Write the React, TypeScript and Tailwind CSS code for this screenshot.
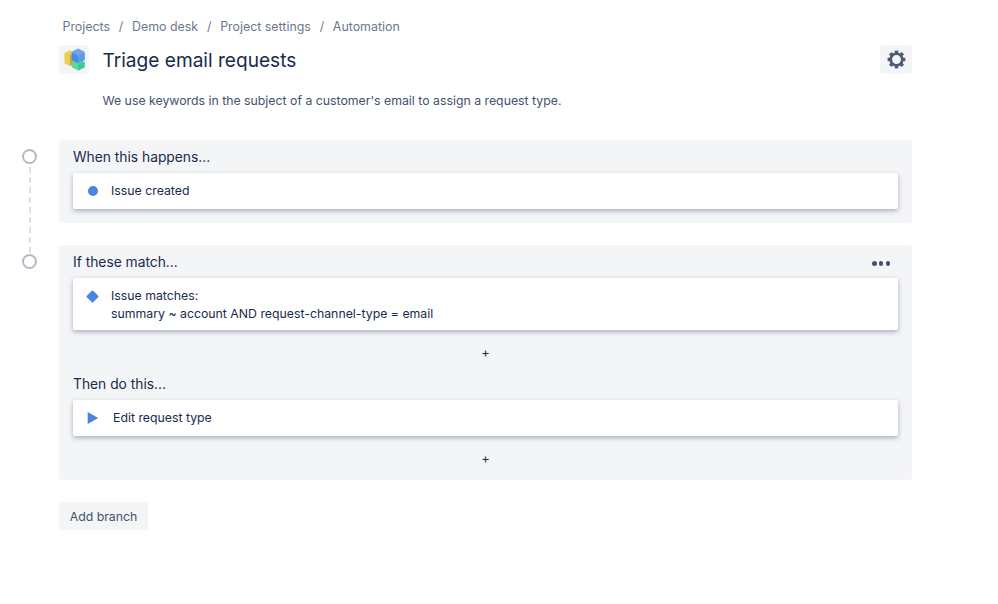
import React from 'react';

const crumbs = ['Projects', 'Demo desk', 'Project settings', 'Automation'];

const Logo = () => (
  <svg width="21" height="23" viewBox="0 0 22 25">
    <path d="M0 5.500 6 2.500l6 3v11l-6 3-6-3z" fill="#e8cf55" />
    <path d="M6 8v11.500l6-3V5.500z" fill="#c9a93a" />
    <path d="M8 15.500l7-3.500 7 3.500V21l-7 3.500L8 21z" fill="#57d9a3" />
    <path d="M15 18v6.500l7-3.500v-6z" fill="#3ec98e" />
    <path d="M8 4l7-3.500L22 4v9l-7 3.500L8 13z" fill="#6ba6ec" />
    <path d="M8 5l7 3.500v8L8 13z" fill="#4a8ae0" />
    <path d="M15 8.500l7-3.500v8l-7 3.500z" fill="#5b9be6" />
  </svg>
);

// ring with eight teeth
const Gear = () => (
  <svg width="19" height="19" viewBox="0 0 24 24" className="text-[#4a5a78]">
    <circle cx="12" cy="12" r="7.300" fill="none" stroke="currentColor" strokeWidth="3.400" />
    {[0, 45, 90, 135, 180, 225, 270, 315].map((a) => (
      <rect key={a} x="9.800" y="0.800" width="4.400" height="4" fill="currentColor" transform={`rotate(${a} 12 12)`} />
    ))}
  </svg>
);

const Card = ({ icon, children, className }: { icon: React.ReactNode; children: React.ReactNode; className: string }) => (
  <div className={`flex items-start bg-white rounded-[2px] pl-[11.500px] text-[12.300px] leading-[18px] text-[#172b4d] shadow-[0_2px_5px_rgba(23,43,77,0.35)] ${className}`}>
    <div className="w-4 h-[18px] flex items-center justify-center shrink-0">{icon}</div>
    <div>{children}</div>
  </div>
);

const Heading = ({ children }: { children: React.ReactNode }) => (
  <h2 className="text-[13.800px] leading-5 text-[#172b4d]">{children}</h2>
);

const Dot = () => <div className="w-[15px] h-[15px] rounded-full border-2 border-[#b3bac5] bg-white" />;

const Plus = () => <div className="text-center text-[13px] leading-4 text-[#172b4d]">+</div>;

export default function App() {
  return (
    <div className="min-h-screen bg-white font-['Inter',sans-serif] pt-[17px] pl-[22px] w-[890px] box-content">
      <div className="pl-[37px]">
        <nav className="flex items-center text-[12.400px] leading-5 text-[#6b778c] pl-[3.500px]">
          {crumbs.map((c, i) => (
            <React.Fragment key={c}>
              {i > 0 && <span className="w-[22px] text-center">/</span>}
              <span>{c}</span>
            </React.Fragment>
          ))}
        </nav>
        <div className="flex items-center justify-between mt-[8px]">
          <div className="flex items-center gap-[13.500px]">
            <div className="w-[30px] h-[29px] bg-[#f4f5f7] rounded-[3px] flex items-center justify-center">
              <Logo />
            </div>
            <h1 className="text-[19.100px] leading-7 text-[#172b4d]">Triage email requests</h1>
          </div>
          <button className="w-8 h-[29px] bg-[#f4f5f7] rounded-[3px] flex items-center justify-center">
            <Gear />
          </button>
        </div>
        <p className="ml-[43.500px] mt-[18px] text-[12.300px] leading-[18px] text-[#42526e]">
          We use keywords in the subject of a customer's email to assign a request type.
        </p>
      </div>

      <div className="flex mt-[30px]">
        <div className="w-[37px] shrink-0 relative pt-[9px]">
          <Dot />
          <div className="absolute left-[7px] top-[27px] h-[86px] w-[2px] bg-[repeating-linear-gradient(to_bottom,#dfe1e6_0,#dfe1e6_6px,transparent_6px,transparent_10px)]" />
        </div>
        <section className="flex-1 h-[83px] bg-[#f4f5f7] rounded-[3px] px-[14px] pt-[7px]">
          <Heading>When this happens...</Heading>
          <div className="mt-[6px]">
            <Card className="gap-[10.500px] py-[9px]" icon={<span className="w-[10px] h-[10px] rounded-full bg-[#4a86e0]" />}>
              Issue created
            </Card>
          </div>
        </section>
      </div>

      <div className="flex mt-[22px]">
        <div className="w-[37px] shrink-0 pt-[9px]">
          <Dot />
        </div>
        <section className="flex-1 h-[235px] bg-[#f4f5f7] rounded-[3px] px-[14px] pt-[7px]">
          <div className="flex items-center justify-between">
            <Heading>If these match...</Heading>
            <div className="flex gap-[2.200px] mr-[8px] mt-[3px]">
              <span className="w-[4.500px] h-[4.500px] rounded-full bg-[#42526e]" />
              <span className="w-[4.500px] h-[4.500px] rounded-full bg-[#42526e]" />
              <span className="w-[4.500px] h-[4.500px] rounded-full bg-[#42526e]" />
            </div>
          </div>
          <div className="mt-[6px]">
            <Card className="gap-[10.500px] pt-[9px] pb-[7px]" icon={<span className="w-[9px] h-[9px] rotate-45 bg-[#4a86e0] rounded-[1px]" />}>
              Issue matches:
              <br />
              summary ~ account AND request-channel-type = email
            </Card>
          </div>
          <div className="mt-[14px]">
            <Plus />
          </div>
          <div className="mt-[14px]">
            <Heading>Then do this...</Heading>
          </div>
          <div className="mt-[6px]">
            <Card
              className="gap-[12.500px] py-[9px]"
              icon={
                <svg width="12" height="12" viewBox="0 0 12 12">
                  <path d="M0.700 0 11.300 6 0.700 12z" fill="#4a86e0" />
                </svg>
              }
            >
              Edit request type
            </Card>
          </div>
          <div className="mt-[14px]">
            <Plus />
          </div>
        </section>
      </div>

      <div className="pl-[37px] mt-[22px]">
        <button className="h-[28px] w-[89px] pt-[2px] bg-[#f4f5f7] rounded-[3px] text-[12.300px] text-[#42526e]">Add branch</button>
      </div>
    </div>
  );
}
